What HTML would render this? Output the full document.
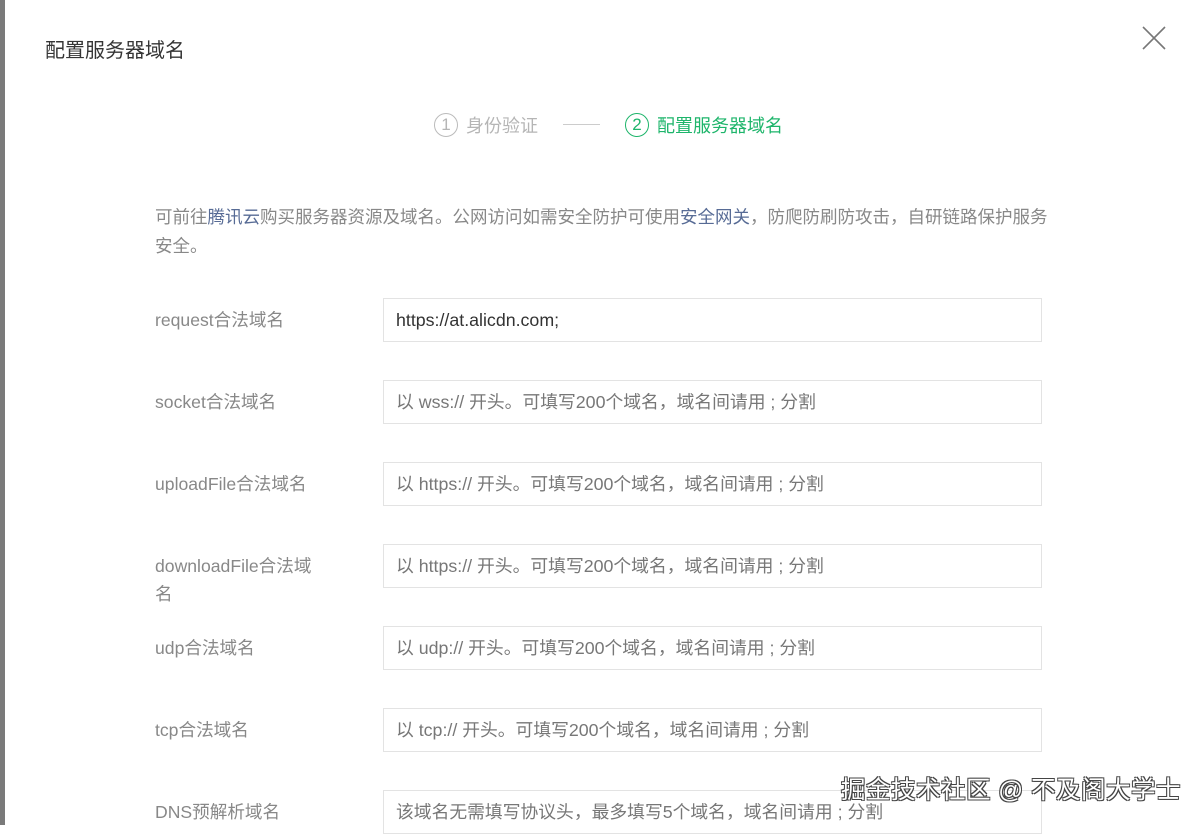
<!DOCTYPE html>
<html><head><meta charset="utf-8"><style>
*{margin:0;padding:0;box-sizing:border-box}
body{width:1200px;height:825px;overflow:hidden;background:#fff;font-family:"Liberation Sans","Noto Sans CJK SC",sans-serif;position:relative}
.bar{position:absolute;left:0;top:0;width:5px;height:825px;background:#7a7a7a}
.title{position:absolute;left:45px;top:34px;font-size:20px;color:#353535}
.close{position:absolute;left:1142px;top:26px;width:24px;height:24px}
.step{position:absolute;top:112px;font-size:18px;display:flex;align-items:center}
.circ{width:24px;height:24px;border-radius:50%;border:1.3px solid;display:inline-flex;align-items:center;justify-content:center;font-size:17px;margin-right:8px}
.line{position:absolute;left:563px;top:124px;width:37px;height:1px;background:#ccc}
.desc{position:absolute;left:155px;top:203px;width:920px;font-size:17.5px;color:#888;line-height:29px}
.desc a{color:#576b95;text-decoration:none}
.lab{position:absolute;left:155px;font-size:17.6px;color:#888;line-height:28px;width:180px}
.inp{position:absolute;left:383px;width:659px;height:44px;border:1px solid #e3e3e3;font-size:17.8px;color:#777;padding-left:12px;line-height:42px}
.wm{position:absolute;left:841px;top:771px;font-size:24.5px;color:#fff;text-shadow:1px 1px 0 #444,-1px -1px 0 #444,1px -1px 0 #444,-1px 1px 0 #444;letter-spacing:0.5px}
</style></head><body>
<div class="bar"></div>
<div class="title">配置服务器域名</div>
<svg class="close" viewBox="0 0 24 24"><path d="M1 1L23 23M23 1L1 23" stroke="#777" stroke-width="1.6"/></svg>
<div class="step" style="left:434px;color:#b5b5b5"><span class="circ" style="border-color:#bbb">1</span>身份验证</div>
<div class="line"></div>
<div class="step" style="left:625px;color:#1eb56b"><span class="circ" style="border-color:#1eb56b">2</span>配置服务器域名</div>
<div class="desc">可前往<a>腾讯云</a>购买服务器资源及域名。公网访问如需安全防护可使用<a>安全网关</a>，防爬防刷防攻击，自研链路保护服务<br>安全。</div>
<div class="lab" style="top:306px">request合法域名</div>
<div class="inp" style="top:298px;color:#333">https://at.alicdn.com;</div>
<div class="lab" style="top:388px">socket合法域名</div>
<div class="inp" style="top:380px">以 wss:// 开头。可填写200个域名，域名间请用 ; 分割</div>
<div class="lab" style="top:470px">uploadFile合法域名</div>
<div class="inp" style="top:462px">以 https:// 开头。可填写200个域名，域名间请用 ; 分割</div>
<div class="lab" style="top:552px;width:172px">downloadFile合法域<br>名</div>
<div class="inp" style="top:544px">以 https:// 开头。可填写200个域名，域名间请用 ; 分割</div>
<div class="lab" style="top:634px">udp合法域名</div>
<div class="inp" style="top:626px">以 udp:// 开头。可填写200个域名，域名间请用 ; 分割</div>
<div class="lab" style="top:716px">tcp合法域名</div>
<div class="inp" style="top:708px">以 tcp:// 开头。可填写200个域名，域名间请用 ; 分割</div>
<div class="lab" style="top:798px">DNS预解析域名</div>
<div class="inp" style="top:790px">该域名无需填写协议头，最多填写5个域名，域名间请用 ; 分割</div>
<div class="wm">掘金技术社区 @ 不及阁大学士</div>
</body></html>
